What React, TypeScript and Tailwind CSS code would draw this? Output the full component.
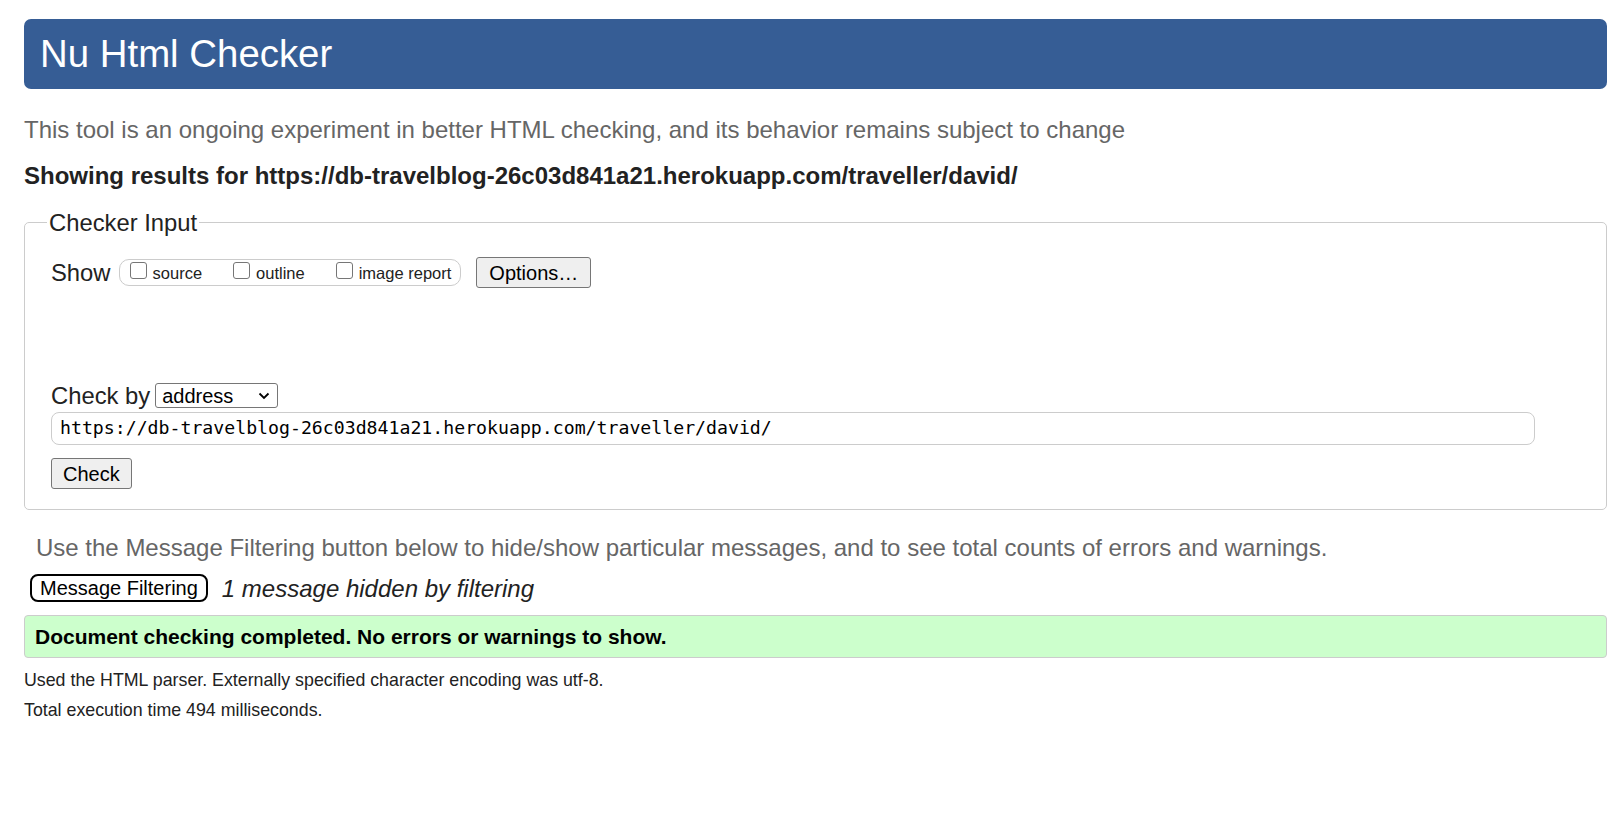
import React from 'react';

const url = 'https://db-travelblog-26c03d841a21.herokuapp.com/traveller/david/';

const Box = ({ label, last }: { label: string; last?: boolean }) => (
    <label className={`flex items-end ${last ? 'mr-[9px]' : 'mr-[31px]'}`}>
        <span className="mb-[4px] mr-[6px] h-[17px] w-[17px] rounded-[3px] border border-[#767676] bg-white"></span>
        <span className="text-[16.5px] leading-[20px] text-[#222]">{label}</span>
    </label>
);

const App: React.FC = () => {
    return (
        <div className="min-h-screen bg-white pl-[24px] pr-[11px] pt-[19px] font-['Liberation_Sans',Arial,sans-serif] text-[#222]">
            <header className="flex h-[70px] items-center rounded-[7px] bg-[#365d95] px-[16px]">
                <h1 className="text-[38.4px] leading-none text-white">Nu Html Checker</h1>
            </header>

            <p className="mt-[27px] text-[24px] leading-[27px] text-[#666]">
                This tool is an ongoing experiment in better HTML checking, and its behavior remains subject to change
            </p>
            <p className="mt-[19px] text-[24px] font-bold leading-[27px] text-[#222]">
                Showing results for {url}
            </p>

            <fieldset className="mt-[20px] rounded-[5px] border border-[#ccc] px-[26px] pb-[20px]">
                <legend className="ml-[-4px] px-[2px] text-[23.8px] leading-[27px] text-[#222]">Checker Input</legend>

                <div className="mt-[21px] flex items-center">
                    <span className="mr-[8px] text-[23.8px] leading-[27px]">Show</span>
                    <div className="flex h-[27px] items-center rounded-[10px] border border-[#ccc] pl-[10px]">
                        <Box label="source" />
                        <Box label="outline" />
                        <Box label="image report" last />
                    </div>
                    <button className="ml-[15px] h-[31px] rounded-[3px] border border-[#767676] bg-[#efefef] px-[12px] text-[20px] leading-none text-black">
                        Options…
                    </button>
                </div>

                <div className="mt-[94px] flex items-center">
                    <span className="mr-[5px] text-[23.8px] leading-[27px]">Check by</span>
                    <div className="flex h-[25px] w-[123px] items-center justify-between rounded-[3px] border border-[#767676] bg-white pl-[6px] pr-[6px]">
                        <span className="text-[20px] leading-none text-black">address</span>
                        <svg width="12" height="8" viewBox="0 0 12 8" className="mr-[1px]">
                            <path d="M1.5 1.5 6 6l4.5-4.5" fill="none" stroke="#000" strokeWidth="1.8" />
                        </svg>
                    </div>
                </div>

                <div className="mt-[3px] flex h-[33px] w-[1484px] items-center rounded-[8px] border border-[#ccc] px-[8px]">
                    <span className="font-['DejaVu_Sans_Mono',monospace] text-[18.2px] leading-none text-black">{url}</span>
                </div>

                <button className="mt-[13px] h-[31px] rounded-[3px] border border-[#767676] bg-[#efefef] px-[11px] text-[20px] leading-none text-black">
                    Check
                </button>
            </fieldset>

            <p className="mt-[24px] pl-[12px] text-[24px] leading-[27px] text-[#666]">
                Use the Message Filtering button below to hide/show particular messages, and to see total counts of errors and warnings.
            </p>

            <div className="mt-[13px] flex items-center pl-[6px]">
                <button className="h-[28px] rounded-[8px] border-2 border-black bg-white px-[8px] text-[20px] leading-none text-black">
                    Message Filtering
                </button>
                <span className="ml-[14px] text-[24px] italic leading-[27px] text-[#222]">1 message hidden by filtering</span>
            </div>

            <div className="mt-[13px] flex h-[43px] items-center rounded-[4px] border border-[#ccc] bg-[#ccffcc] px-[10px]">
                <span className="text-[21px] font-bold leading-none text-black">
                    Document checking completed. No errors or warnings to show.
                </span>
            </div>

            <p className="mt-[12px] text-[17.8px] leading-[21px] text-[#222]">
                Used the HTML parser. Externally specified character encoding was utf-8.
            </p>
            <p className="mt-[9px] text-[17.8px] leading-[21px] text-[#222]">Total execution time 494 milliseconds.</p>
        </div>
    );
};

export default App;
